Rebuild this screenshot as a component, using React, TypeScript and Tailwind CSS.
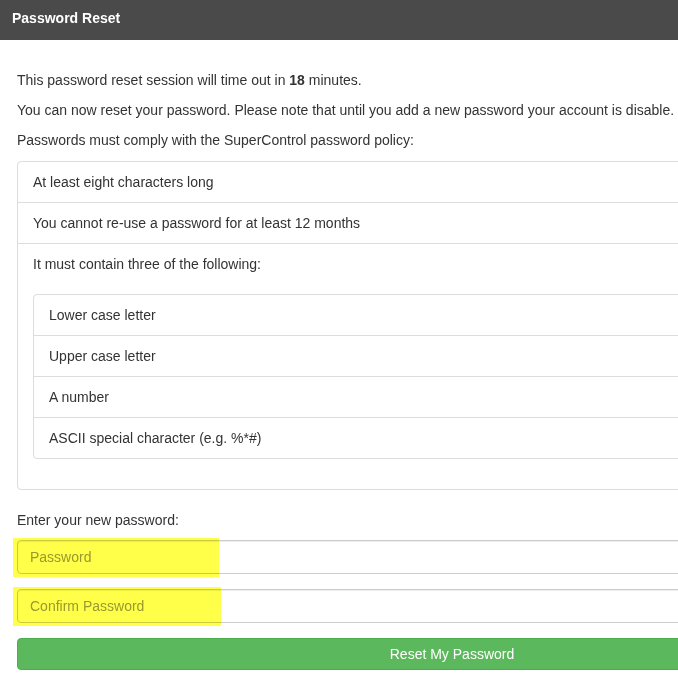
const rules = ["At least eight characters long", "You cannot re-use a password for at least 12 months"];
const options = ["Lower case letter", "Upper case letter", "A number", "ASCII special character (e.g. %*#)"];

function Highlighted({ placeholder, mark }: { placeholder: string; mark: string }) {
  return (
    <div className="relative">
      <input
        type="password"
        placeholder={placeholder}
        className="block h-[34px] w-full rounded border border-[#ccc] px-3 text-[14px] text-[#555] shadow-[inset_0_1px_1px_rgba(0,0,0,0.075)] outline-none placeholder:text-[#999]"
      />
      <div className={`pointer-events-none absolute -top-[2px] -bottom-[3px] -left-[4px] bg-[#ffff4a] mix-blend-multiply ${mark}`} />
    </div>
  );
}

export default function App() {
  return (
    <div className="min-h-[682px] w-full overflow-hidden bg-white font-['Liberation_Sans',Arial,sans-serif] text-[14px] leading-5 text-[#333]">
      <div className="flex h-10 items-center bg-[#4a4a4a] px-3 pb-1">
        <h1 className="text-[14px] font-bold text-white">Password Reset</h1>
      </div>
      <div className="w-[887px] pl-[17px] pt-[30px]">
        <p className="mb-[10px] whitespace-nowrap">
          This password reset session will time out in <b>18</b> minutes.
        </p>
        <p className="mb-[10px] whitespace-nowrap">
          You can now reset your password. Please note that until you add a new password your account is disable.
        </p>
        <p className="mb-[10px] whitespace-nowrap">Passwords must comply with the SuperControl password policy:</p>

        <ul className="mb-5 mt-[11px]">
          {rules.map((r, i) => (
            <li
              key={r}
              className={`border border-[#ddd] px-[15px] py-[10px] ${i === 0 ? "rounded-t" : "-mt-px"}`}
            >
              {r}
            </li>
          ))}
          <li className="-mt-px rounded-b border border-[#ddd] px-[15px] pb-[10px] pt-[10px]">
            It must contain three of the following:
            <ul className="mb-5 mt-5">
              {options.map((o, i) => (
                <li
                  key={o}
                  className={`border border-[#ddd] px-[15px] py-[10px] ${i === 0 ? "rounded-t" : "-mt-px"} ${
                    i === options.length - 1 ? "rounded-b" : ""
                  }`}
                >
                  {o}
                </li>
              ))}
            </ul>
          </li>
        </ul>

        <p className="mb-[10px]">Enter your new password:</p>
        <div className="flex flex-col gap-[15px]">
          <Highlighted placeholder="Password" mark="w-[206px]" />
          <Highlighted placeholder="Confirm Password" mark="w-[208px]" />
          <button className="h-[32px] w-full rounded border border-[#4cae4c] bg-[#5cb85c] text-[14px] text-white">
            Reset My Password
          </button>
        </div>
      </div>
    </div>
  );
}
